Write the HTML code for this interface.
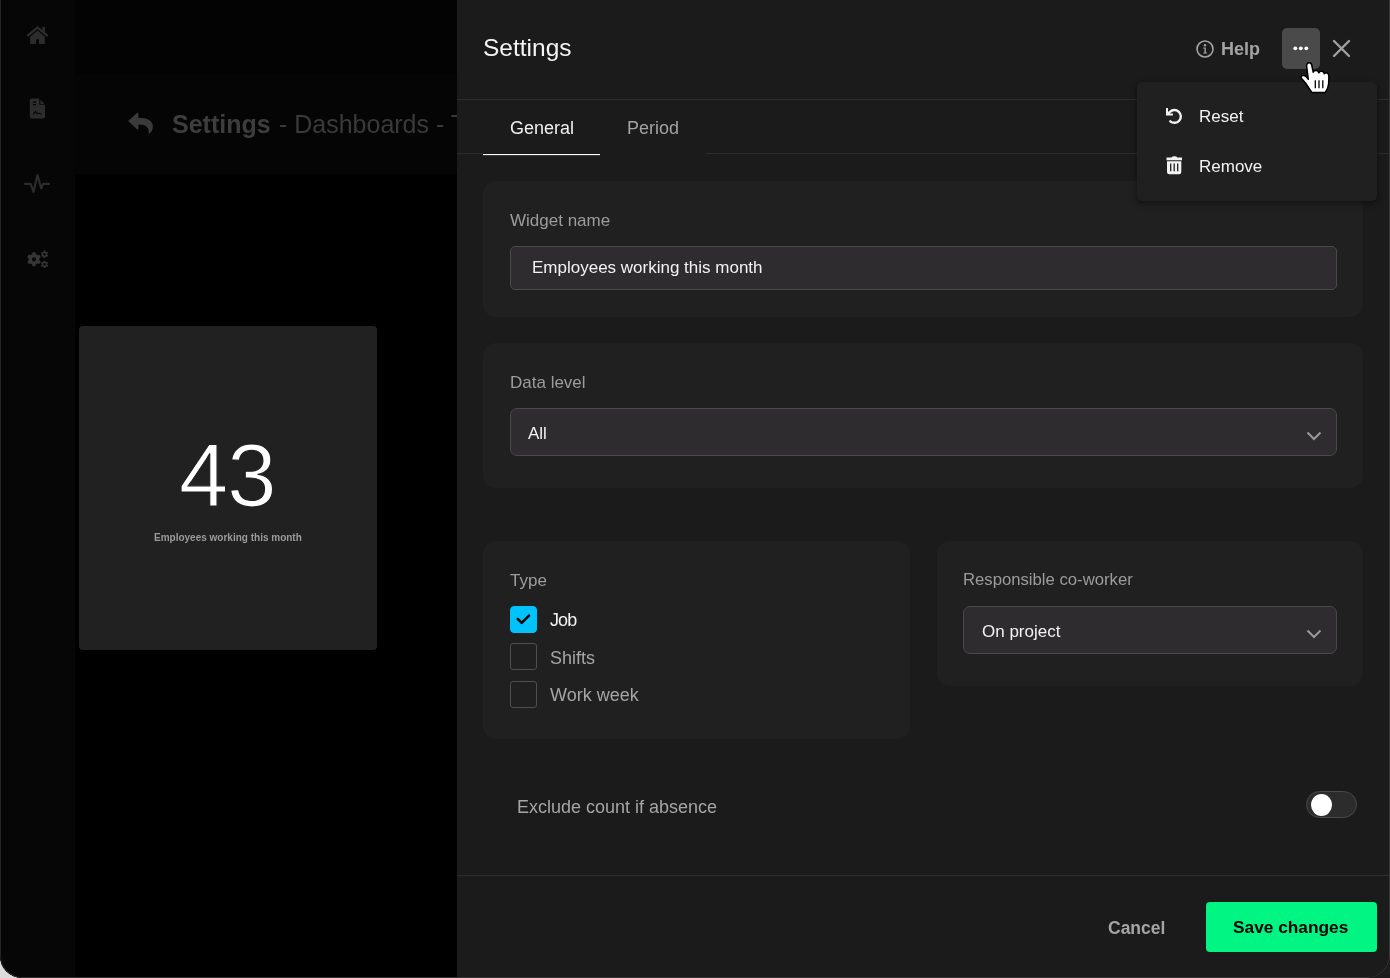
<!DOCTYPE html>
<html><head><meta charset="utf-8">
<style>
*{box-sizing:border-box;margin:0;padding:0}
html,body{width:1390px;height:978px;overflow:hidden;background:#1c1c1c;font-family:"Liberation Sans",sans-serif}
.a{position:absolute}
.t{position:absolute;white-space:nowrap;line-height:1;will-change:transform}
#bl{position:absolute;left:0;top:900px;width:200px;height:78px;background:#dcdcdc}
#win{position:absolute;left:0;top:0;width:1390px;height:978px;background:#000;border-radius:0 0 22px 22px;overflow:hidden}
#wb{position:absolute;left:0;top:-20px;width:1390px;height:998px;border:1px solid #333;border-left-color:#252525;border-right-color:#383838;border-radius:0 0 22px 22px;pointer-events:none}
.card{position:absolute;background:#202020;border-radius:13px}
.lbl{color:#9c9c9c;font-size:17px}
.inp{position:absolute;background:#2e2c2e;border:1px solid #4a494a;border-radius:5px}
.val{color:#f2f2f2;font-size:17px}
.cb{position:absolute;left:510px;width:27px;height:27px;border:1px solid #4e4d52;border-radius:3px}
</style></head>
<body>
<div id="bl"></div>
<div id="win">
  <!-- background app -->
  <div class="a" style="left:0;top:0;width:75px;height:978px;background:#060606"></div>
  <div class="a" style="left:75px;top:0;width:382px;height:74px;background:#030303"></div>
  <div class="a" style="left:75px;top:74px;width:382px;height:100px;background:#050505"></div>

  <!-- sidebar icons -->
  <svg class="a" style="left:0;top:0" width="75" height="290" viewBox="0 0 75 290">
    <g fill="#2c2c2c">
      <path d="M27.4 36 L37.5 27.4 L47.6 36" fill="none" stroke="#2c2c2c" stroke-width="2.3"/>
      <path d="M42.3 27 H45 V32.5 L42.3 30.5z"/>
      <path d="M30.1 36.8 L37.5 30.5 L44.8 36.8 V43.9 H38.9 V39.2 H36.1 V43.9 H30.1z"/>
      <path d="M31.8 98.6 H39.3 V104.7 H45 V116.5 Q45 118.5 43 118.5 H31.8 Q29.8 118.5 29.8 116.5 V100.6 Q29.8 98.6 31.8 98.6z"/>
      <path d="M40.3 99.6 L44.5 103.9 H40.3z"/>
      <path d="M25 183.8 H30.6 L33.5 192 L37.5 175 L41.2 188.4 L43.2 183.8 H49" fill="none" stroke="#2c2c2c" stroke-width="2.2" stroke-linejoin="round" stroke-linecap="round"/>
    </g>
    <path d="M32.9 102.1 H36 M32.9 104.6 H36" stroke="#060606" stroke-width="1.1"/>
    <path d="M33.2 114.4 L35.5 111.3 L36.8 113.6 L38.9 113.3 L41.6 114.2" fill="none" stroke="#060606" stroke-width="1.1"/>
    <g fill="#363636" fill-rule="evenodd">
      <path d="M32.30 254.07 L32.45 252.37 L35.55 252.37 L35.70 254.07 L37.68 255.21 L39.23 254.49 L40.78 257.18 L39.38 258.16 L39.38 260.44 L40.78 261.42 L39.23 264.11 L37.68 263.39 L35.70 264.53 L35.55 266.23 L32.45 266.23 L32.30 264.53 L30.32 263.39 L28.77 264.11 L27.22 261.42 L28.62 260.44 L28.62 258.16 L27.22 257.18 L28.77 254.49 L30.32 255.21Z M34 257.2 A2.1 2.1 0 1 0 34 261.40000000000003 A2.1 2.1 0 1 0 34 257.2z"/>
      <path d="M43.63 251.64 L43.67 250.59 L45.33 250.59 L45.37 251.64 L46.37 252.22 L47.30 251.73 L48.13 253.16 L47.24 253.72 L47.24 254.88 L48.13 255.44 L47.30 256.87 L46.37 256.38 L45.37 256.96 L45.33 258.01 L43.67 258.01 L43.63 256.96 L42.63 256.38 L41.70 256.87 L40.87 255.44 L41.76 254.88 L41.76 253.72 L40.87 253.16 L41.70 251.73 L42.63 252.22Z M44.5 253.0 A1.3 1.3 0 1 0 44.5 255.60000000000002 A1.3 1.3 0 1 0 44.5 253.0z"/>
      <path d="M43.63 261.74 L43.67 260.69 L45.33 260.69 L45.37 261.74 L46.37 262.32 L47.30 261.83 L48.13 263.26 L47.24 263.82 L47.24 264.98 L48.13 265.54 L47.30 266.97 L46.37 266.48 L45.37 267.06 L45.33 268.11 L43.67 268.11 L43.63 267.06 L42.63 266.48 L41.70 266.97 L40.87 265.54 L41.76 264.98 L41.76 263.82 L40.87 263.26 L41.70 261.83 L42.63 262.32Z M44.5 263.09999999999997 A1.3 1.3 0 1 0 44.5 265.7 A1.3 1.3 0 1 0 44.5 263.09999999999997z"/>
    </g>
  </svg>

  <!-- header of background page -->
  <svg class="a" style="left:120px;top:105px" width="40" height="35" viewBox="120 105 40 35">
    <path d="M128.1 121 L137 113 Q138.4 112 138.4 113.8 V117.8 C147.5 117.8 153 120.5 152.9 127 C152.8 130.5 150.6 132.8 148.6 134.2 C149.6 127.5 146.5 124.4 138.4 124.4 V128.4 Q138.4 130.2 137 129.2 z" fill="#3a3a3a"/>
  </svg>
  <div class="t" style="left:172px;top:112px;font-size:25px;font-weight:700;color:#3d3d3d">Settings</div>
  <div class="t" style="left:272px;top:112px;font-size:25px;color:#3a3a3a">&nbsp;- Dashboards - T</div>

  <!-- left dashboard card -->
  <div class="a" style="left:79px;top:326px;width:298px;height:324px;background:#212121;border-radius:4px"></div>
  <div class="t" style="left:178.5px;top:431.6px;font-size:88.5px;letter-spacing:-1px;color:#fff;-webkit-text-stroke:1.2px #212121">43</div>
  <div class="t" style="left:154px;top:532.9px;font-size:10px;font-weight:700;color:#9a9a9a">Employees working this month</div>

  <!-- settings panel -->
  <div class="a" style="left:457px;top:0;width:933px;height:978px;background:#1b1b1b"></div>
  <div class="t" style="left:483px;top:36.3px;font-size:24.5px;color:#f4f4f4">Settings</div>

  <!-- help / dots / close -->
  <svg class="a" style="left:1196px;top:40px" width="18" height="18" viewBox="0 0 18 18">
    <circle cx="9" cy="9" r="8" fill="none" stroke="#a3a3a3" stroke-width="1.6"/>
    <circle cx="9" cy="5.3" r="1.2" fill="#a3a3a3"/>
    <path d="M7.3 7.6 H9.8 V12.6 H11 V13.6 H7.3 V12.6 H8.4 V8.6 H7.3z" fill="#a3a3a3"/>
  </svg>
  <div class="t" style="left:1221px;top:40.2px;font-size:18px;font-weight:700;color:#a3a3a3">Help</div>
  <div class="a" style="left:1282px;top:28px;width:38px;height:41px;background:#4a4a4a;border-radius:5px"></div>
  <svg class="a" style="left:1292px;top:45px" width="18" height="7" viewBox="0 0 18 7">
    <circle cx="3.3" cy="3.3" r="1.9" fill="#fff"/><circle cx="8.8" cy="3.3" r="1.9" fill="#fff"/><circle cx="14.3" cy="3.3" r="1.9" fill="#fff"/>
  </svg>
  <svg class="a" style="left:1332px;top:39px" width="19" height="19" viewBox="0 0 19 19">
    <path d="M2 2 L17 17 M17 2 L2 17" stroke="#a0a0a0" stroke-width="2.4" stroke-linecap="round"/>
  </svg>

  <div class="a" style="left:457px;top:99px;width:933px;height:1px;background:#2e2d2e"></div>

  <!-- tabs -->
  <div class="t" style="left:510px;top:118.8px;font-size:18px;color:#f0f0f0">General</div>
  <div class="t" style="left:627px;top:118.8px;font-size:18px;color:#a3a3a3">Period</div>
  <div class="a" style="left:457px;top:153px;width:26px;height:1px;background:#2e2d2e"></div>
  <div class="a" style="left:706px;top:153px;width:684px;height:1px;background:#2e2d2e"></div>
  <div class="a" style="left:483px;top:154px;width:117px;height:1px;background:#fff;box-shadow:0 0.4px 0 rgba(255,255,255,0.35)"></div>

  <!-- card 1 widget name -->
  <div class="card" style="left:483px;top:181px;width:880px;height:136px"></div>
  <div class="t lbl" style="left:510px;top:211.6px">Widget name</div>
  <div class="inp" style="left:510px;top:246px;width:827px;height:44px"></div>
  <div class="t val" style="left:532px;top:258.6px">Employees working this month</div>

  <!-- card 2 data level -->
  <div class="card" style="left:483px;top:343px;width:880px;height:145px"></div>
  <div class="t lbl" style="left:510px;top:373.9px">Data level</div>
  <div class="inp" style="left:510px;top:408px;width:827px;height:48px;border-radius:7px"></div>
  <div class="t val" style="left:528px;top:424.9px">All</div>
  <svg class="a" style="left:1306px;top:431px" width="16" height="10" viewBox="0 0 16 10">
    <path d="M1.5 1.5 L8 8 L14.5 1.5" fill="none" stroke="#9a9a9a" stroke-width="2"/>
  </svg>

  <!-- card 3 type -->
  <div class="card" style="left:483px;top:541px;width:427px;height:198px"></div>
  <div class="t lbl" style="left:510px;top:571.8px">Type</div>
  <div class="cb" style="top:606px;background:#00c3fe;border-color:#00c3fe;border-radius:4px"></div>
  <svg class="a" style="left:510px;top:606px" width="27" height="27" viewBox="510 606 27 27">
    <path d="M517.8 619 L521.7 622.9 L529 615.7" fill="none" stroke="#000" stroke-width="2.5" stroke-linecap="round" stroke-linejoin="round"/>
  </svg>
  <div class="t" style="left:549.5px;top:611.4px;font-size:18px;letter-spacing:-0.9px;color:#f2f2f2">Job</div>
  <div class="cb" style="top:643px"></div>
  <div class="t" style="left:550px;top:648.8px;font-size:18px;color:#a5a5a5">Shifts</div>
  <div class="cb" style="top:681px"></div>
  <div class="t" style="left:550px;top:686.3px;font-size:18px;color:#a5a5a5">Work week</div>

  <!-- card 4 responsible -->
  <div class="card" style="left:937px;top:541px;width:426px;height:145px"></div>
  <div class="t lbl" style="left:963px;top:571.8px;font-size:16.7px">Responsible co-worker</div>
  <div class="inp" style="left:963px;top:606px;width:374px;height:48px;border-radius:7px"></div>
  <div class="t val" style="left:982px;top:623.3px">On project</div>
  <svg class="a" style="left:1306px;top:629px" width="16" height="10" viewBox="0 0 16 10">
    <path d="M1.5 1.5 L8 8 L14.5 1.5" fill="none" stroke="#9a9a9a" stroke-width="2"/>
  </svg>

  <!-- exclude -->
  <div class="t" style="left:517px;top:798.3px;font-size:18px;color:#a5a5a5">Exclude count if absence</div>
  <div class="a" style="left:1306px;top:791px;width:51px;height:27px;border-radius:14px;background:#2d2c2d;border:1px solid #4a494a"></div>
  <div class="a" style="left:1311px;top:794px;width:21px;height:22px;border-radius:50%;background:#fff"></div>

  <!-- footer -->
  <div class="a" style="left:457px;top:875px;width:933px;height:1px;background:#2e2d2e"></div>
  <div class="t" style="left:1108px;top:920.2px;font-size:17.5px;font-weight:700;color:#a5a5a5">Cancel</div>
  <div class="a" style="left:1206px;top:902px;width:171px;height:50px;background:#00f582;border-radius:4px"></div>
  <div class="t" style="left:1233px;top:919.4px;font-size:17.3px;font-weight:700;color:#000">Save changes</div>

  <!-- dropdown menu -->
  <div class="a" style="left:1137px;top:82px;width:240px;height:119px;background:#202020;border-radius:5px;box-shadow:0 2px 6px rgba(0,0,0,0.5)"></div>
  <svg class="a" style="left:1160px;top:100px" width="30" height="80" viewBox="1160 100 30 80">
    <path d="M1167.5 114 L1169.9 111.9 A6.4 6.4 0 1 1 1170.3 121.3" fill="none" stroke="#f2f2f2" stroke-width="2.4" stroke-linecap="round"/>
    <path d="M1167 108.1 V114.5 H1172.9" fill="none" stroke="#f2f2f2" stroke-width="2"/>
    <path d="M1166.5 157.6 H1171.5 Q1172 156.2 1174.4 156.2 Q1176.8 156.2 1177.3 157.6 H1182 V160.2 H1166.5z" fill="#f2f2f2"/>
    <path d="M1167 161.3 H1181.3 V172 Q1181.3 174.2 1179 174.2 H1169.3 Q1167 174.2 1167 172z" fill="#f2f2f2"/>
    <path d="M1170.7 163.6 V171.3 M1174.2 163.6 V171.3 M1177.7 163.6 V171.3" stroke="#202020" stroke-width="1.3"/>
  </svg>
  <div class="t" style="left:1199px;top:108.4px;font-size:17px;color:#f2f2f2">Reset</div>
  <div class="t" style="left:1199px;top:158.4px;font-size:17px;color:#f2f2f2">Remove</div>

  <!-- hand cursor -->
  <svg class="a" style="left:1290px;top:55px" width="50" height="45" viewBox="1290 55 50 45">
    <path d="M1306.6 66 Q1306.8 62.6 1309.4 62.8 Q1311.6 63 1311.9 66 L1313.2 72.2 Q1314 70.3 1316.4 70.6 Q1318.4 70.9 1318.8 72.8 Q1319.8 70.9 1322 71.3 Q1324 71.8 1324.3 73.8 Q1325.4 72.4 1327 73 Q1329 73.8 1328.9 76.8 L1328.6 84 Q1328.2 88.5 1325.2 92.6 L1312 92.6 Q1309 88.5 1305.5 83 L1301.6 78.6 Q1300.4 76.6 1302.4 75.6 Q1304.6 74.8 1306.4 77 L1308.3 79.3 z" fill="#fff" stroke="#000" stroke-width="1.5" stroke-linejoin="round"/>
    <path d="M1315.3 80.2 V88.3 M1319 80.2 V88.3 M1322.8 80.2 V88.3" stroke="#000" stroke-width="1.3"/>
  </svg>

  <div id="wb"></div>
</div>
</body></html>
